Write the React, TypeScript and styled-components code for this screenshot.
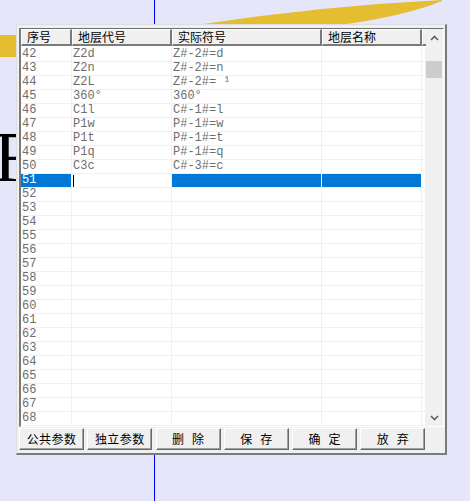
import React from 'react';
import styled, { createGlobalStyle } from 'styled-components';

const GlobalStyle = createGlobalStyle`
  * { box-sizing: border-box; }
  body {
    margin: 0;
    background: #e6e6fa;
    font-family: 'Noto Sans CJK SC', 'Liberation Sans', sans-serif;
  }
`;

const Page = styled.div`
  position: relative;
  width: 470px;
  height: 501px;
  overflow: hidden;
  background: #e6e6fa;
  padding: 24px 0 0 16px;
`;

// background drawing on the canvas behind the dialog
const BlueLine = styled.div`
  position: absolute;
  left: 154px;
  top: 0;
  width: 1px;
  height: 100%;
  background: #0000ff;
`;

const Band = styled.svg`
  position: absolute;
  left: 0;
  top: 0;
`;

const YellowBlock = styled.div`
  position: absolute;
  left: 0;
  top: 35px;
  width: 20px;
  height: 22px;
  background: #e4bd30;
`;

const LetterClip = styled.div`
  position: absolute;
  left: 0;
  top: 122px;
  width: 16px;
  height: 71px;
  overflow: hidden;
`;

const BigLetter = styled.div`
  margin-left: -6px;
  font-family: 'Liberation Serif', serif;
  font-size: 71px;
  line-height: 71px;
  color: #000;
`;

const Dialog = styled.div`
  position: relative;
  z-index: 1;
  width: 431px;
  height: 431px;
  background: #f0f0f0;
  border-top: 1px solid #dedede;
  border-left: 1px solid #dedede;
  border-right: 2px solid #7a7a7a;
  border-bottom: 2px solid #7a7a7a;
  padding: 3px 1px 3px 2px;
  display: flex;
  flex-direction: column;
  gap: 1px;
`;

const Frame = styled.div`
  display: flex;
  width: 425px;
  border-top: 1px solid #6d6d6d;
  border-left: 2px solid #7a7a7a;
  border-right: 1px solid #ffffff;
  border-bottom: 1px solid #ffffff;
  background: #ffffff;
`;

const Table = styled.div`
  width: 405px;
  display: flex;
  flex-direction: column;
`;

const HeaderRow = styled.div`
  display: flex;
  height: 17px;
  margin-bottom: 2px;
  background: #f0f0f0;
`;

const HeaderCell = styled.div<{ $w: number }>`
  width: ${({ $w }) => $w}px;
  flex: none;
  height: 17px;
  background: #f0f0f0;
  border-top: 1px solid #ffffff;
  border-left: 1px solid #ffffff;
  border-right: 2px solid #7a7a7a;
  border-bottom: 2px solid #7a7a7a;
  padding-left: 5px;
  font-size: 12px;
  line-height: 14px;
  color: #000;
  white-space: nowrap;
  overflow: hidden;
`;

const Row = styled.div`
  display: flex;
  height: 14px;
  border-bottom: 1px solid #f0f0f0;
`;

const Cell = styled.div<{ $w: number; $sel?: boolean }>`
  width: ${({ $w }) => $w}px;
  flex: none;
  height: 13px;
  border-right: 1px solid ${({ $sel }) => ($sel ? '#ffffff' : '#f0f0f0')};
  background: ${({ $sel }) => ($sel ? '#0078d7' : '#ffffff')};
  color: ${({ $sel }) => ($sel ? '#ffffff' : '#6e6e6e')};
  font-family: 'Liberation Mono', monospace;
  font-size: 12px;
  line-height: 13px;
  padding-left: 1px;
  white-space: pre;
  overflow: hidden;
  display: flex;
  align-items: center;
`;

const Caret = styled.span`
  display: inline-block;
  width: 1px;
  height: 12px;
  background: #000;
`;

const ScrollBar = styled.div`
  width: 17px;
  background: #f0f0f0;
  display: flex;
  flex-direction: column;
`;

const ArrowBox = styled.div`
  height: 17px;
  display: flex;
  align-items: center;
  justify-content: center;
`;

const Track = styled.div`
  flex: 1;
`;

const Thumb = styled.div`
  margin: 15px 1px 0 0;
  height: 17px;
  background: #cdcdcd;
`;

const ButtonBar = styled.div`
  display: flex;
  gap: 3.25px;
`;

const Button = styled.button<{ $spaced?: boolean }>`
  width: 65px;
  height: 22px;
  padding: 0 0 0 ${({ $spaced }) => ($spaced ? '8px' : '0')};
  margin: 0;
  background: #f0f0f0;
  border-top: 1px solid #ffffff;
  border-left: 1px solid #ffffff;
  border-right: 1px solid #696969;
  border-bottom: 1px solid #696969;
  box-shadow: inset -1px -1px 0 #a0a0a0;
  font-family: 'Noto Sans CJK SC', sans-serif;
  font-size: 12px;
  line-height: 18px;
  letter-spacing: ${({ $spaced }) => ($spaced ? '8px' : '0.4px')};
  color: #000;
  text-align: center;
  white-space: nowrap;
`;

const widths = [51, 100, 150, 100, 4];
const titles = ['序号', '地层代号', '实际符号', '地层名称', ''];

const data: Record<number, [string, string]> = {
  42: ['Z2d', 'Z#-2#=d'],
  43: ['Z2n', 'Z#-2#=n'],
  44: ['Z2L', 'Z#-2#= ¹'],
  45: ['360°', '360°'],
  46: ['C1l', 'C#-1#=l'],
  47: ['P1w', 'P#-1#=w'],
  48: ['P1t', 'P#-1#=t'],
  49: ['P1q', 'P#-1#=q'],
  50: ['C3c', 'C#-3#=c'],
};

const rows = Array.from({ length: 27 }, (_, i) => 42 + i);
const selected = 51;

const Chevron = ({ down }: { down?: boolean }) => (
  <svg width="9" height="6" viewBox="0 0 9 6">
    <polyline
      points={down ? '1,1 4.5,4.5 8,1' : '1,5 4.5,1.5 8,5'}
      fill="none"
      stroke="#606060"
      strokeWidth="1.6"
    />
  </svg>
);

const App = () => (
  <Page>
    <GlobalStyle />
    <BlueLine />
    <Band width="470" height="30" viewBox="0 0 470 30">
      <path d="M196,25 Q320,6 442,0 L442,1 Q405,16 340,25 Z" fill="#e4bd30" />
    </Band>
    <YellowBlock />
    <LetterClip>
      <BigLetter>F</BigLetter>
    </LetterClip>
    <Dialog>
      <Frame>
        <Table>
          <HeaderRow>
            {titles.map((t, i) => (
              <HeaderCell key={i} $w={widths[i]}>
                {t}
              </HeaderCell>
            ))}
          </HeaderRow>
          {rows.map((n) => {
            const sel = n === selected;
            const [code, sym] = data[n] || ['', ''];
            return (
              <Row key={n}>
                <Cell $w={widths[0]} $sel={sel}>{String(n)}</Cell>
                <Cell $w={widths[1]}>{sel ? <Caret /> : code}</Cell>
                <Cell $w={widths[2]} $sel={sel}>{sym}</Cell>
                <Cell $w={widths[3]} $sel={sel} />
                <Cell $w={widths[4]} />
              </Row>
            );
          })}
        </Table>
        <ScrollBar>
          <ArrowBox>
            <Chevron />
          </ArrowBox>
          <Track>
            <Thumb />
          </Track>
          <ArrowBox>
            <Chevron down />
          </ArrowBox>
        </ScrollBar>
      </Frame>
      <ButtonBar>
        <Button>公共参数</Button>
        <Button>独立参数</Button>
        <Button $spaced>删除</Button>
        <Button $spaced>保存</Button>
        <Button $spaced>确定</Button>
        <Button $spaced>放弃</Button>
      </ButtonBar>
    </Dialog>
  </Page>
);

export default App;
